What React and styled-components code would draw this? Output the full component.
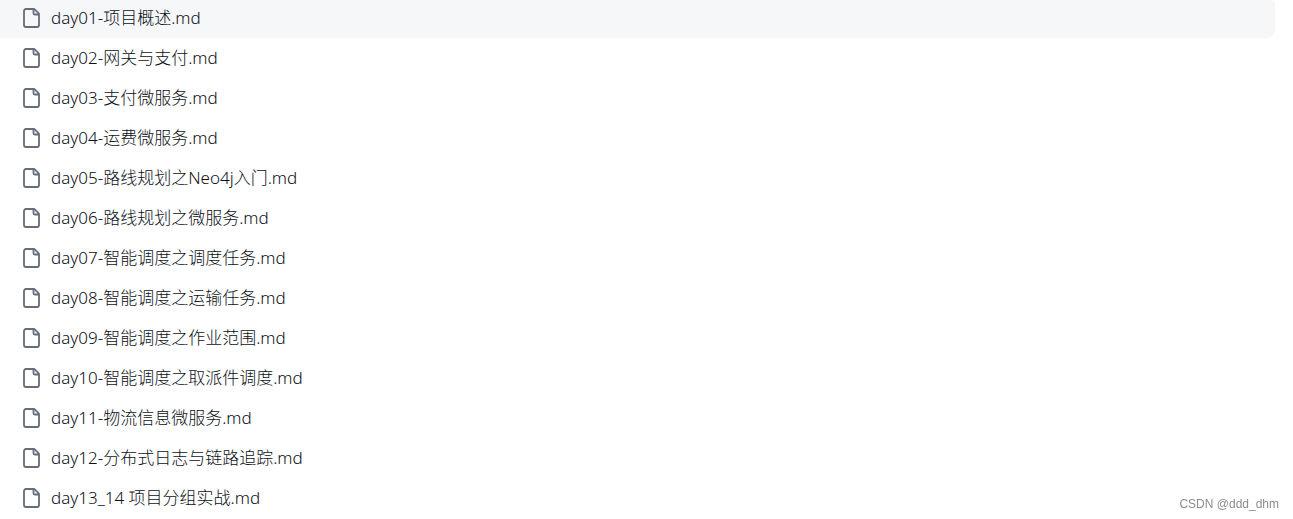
import React from "react";
import styled, { createGlobalStyle } from "styled-components";

const GlobalStyle = createGlobalStyle`
  * { box-sizing: border-box; }
  body {
    margin: 0;
    background: #ffffff;
    color: #0c1016;
    font-family: "Noto Sans", "Noto Sans CJK SC", sans-serif;
  }
`;

const Page = styled.main`
  padding-right: 18px;
`;

const FileList = styled.ul`
  list-style: none;
  margin: 0;
  padding: 0;
  display: flex;
  flex-direction: column;
`;

const FileRow = styled.li`
  display: flex;
  align-items: center;
  gap: 10px;
  height: 40px;
  padding: 0 22px;
`;

const FirstRow = styled(FileRow)`
  height: 38px;
  padding-bottom: 2px;
  background: #f6f7f9;
  border-radius: 0 4px 8px 0;
`;

const FileLabel = styled.span`
  font-size: 17px;
  font-weight: 300;
  line-height: 24px;
  white-space: nowrap;
`;

const Credit = styled.footer`
  position: fixed;
  right: 14px;
  bottom: 6px;
  font: 12px/18px "Liberation Sans", sans-serif;
  color: #8c8c8c;
`;

const files = [
  "day01-项目概述.md",
  "day02-网关与支付.md",
  "day03-支付微服务.md",
  "day04-运费微服务.md",
  "day05-路线规划之Neo4j入门.md",
  "day06-路线规划之微服务.md",
  "day07-智能调度之调度任务.md",
  "day08-智能调度之运输任务.md",
  "day09-智能调度之作业范围.md",
  "day10-智能调度之取派件调度.md",
  "day11-物流信息微服务.md",
  "day12-分布式日志与链路追踪.md",
  "day13_14 项目分组实战.md",
];

function FileIcon() {
  return (
    <svg width="19" height="20" viewBox="0 0 19 20" fill="none" stroke="#656d79" strokeWidth="1.8" strokeLinejoin="round" aria-hidden="true">
      <path d="M12 1H4A2 2 0 0 0 2 3V17A2 2 0 0 0 4 19H15A2 2 0 0 0 17 17V6Q17 5.600 16.700 5.300L12.700 1.300Q12.400 1 12 1Z" />
      <path d="M11.500 1V5A1.500 1.500 0 0 0 13 6.500H17" />
    </svg>
  );
}

export default function App() {
  return (
    <>
      <GlobalStyle />
      <Page>
        <FileList>
          {files.map((name, index) => {
            const Row = index === 0 ? FirstRow : FileRow;
            return (
              <Row key={name}>
                <FileIcon />
                <FileLabel>{name}</FileLabel>
              </Row>
            );
          })}
        </FileList>
      </Page>
      <Credit>CSDN @ddd_dhm</Credit>
    </>
  );
}
